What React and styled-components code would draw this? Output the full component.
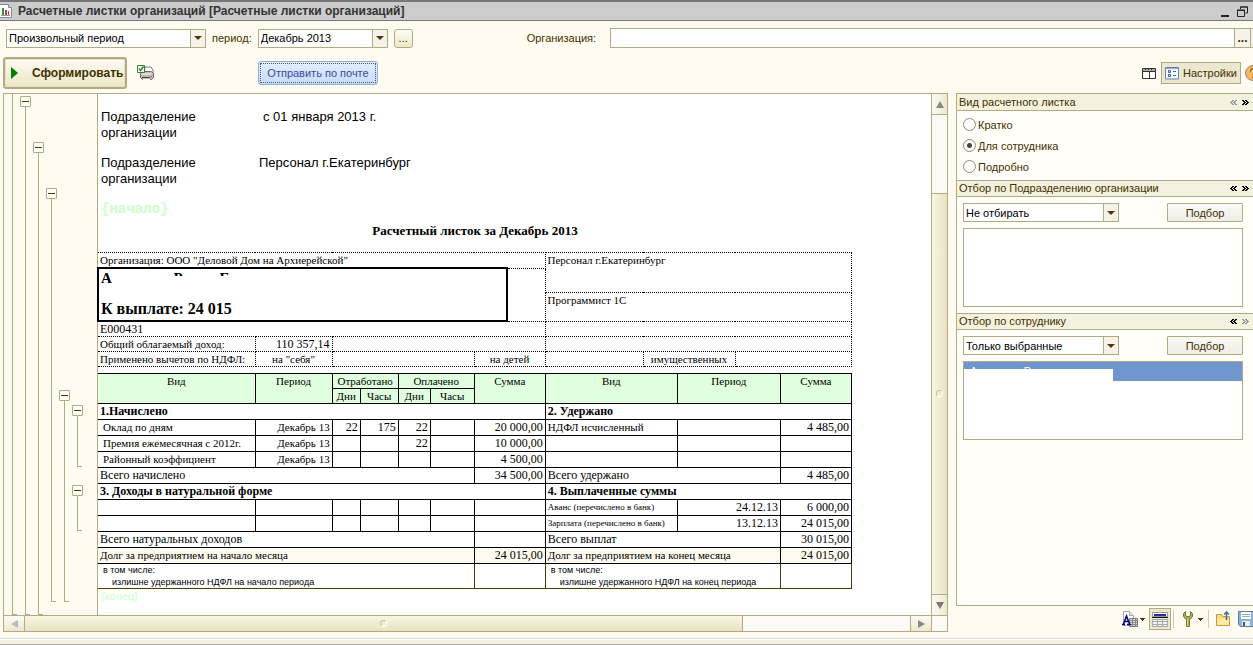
import React from 'react'
import styled, { createGlobalStyle, css } from 'styled-components'

const line = '#b3aa82'
const cream = '#fffbf0'
const bar = '#f4f1de'
const brown = '#4c3a00'

const GlobalStyle = createGlobalStyle`
  * {
    box-sizing: border-box;
  }
  body {
    margin: 0;
    background: ${cream};
    font-family: 'Liberation Sans', Arial, sans-serif;
    font-size: 11px;
    color: #3f3000;
    overflow: hidden;
  }
  button,
  select,
  input {
    font: inherit;
    color: inherit;
    margin: 0;
    padding: 0;
    border-radius: 0;
  }
  svg {
    display: block;
    flex: none;
  }
`

const Window = styled.div`
  display: flex;
  flex-direction: column;
`

const TitleBar = styled.header`
  display: flex;
  align-items: center;
  height: 21px;
  padding: 0 5px 0 0;
  background: #cccccc;
  border-top: 2px solid #777;
  border-bottom: 1px solid #777;
`

const Title = styled.h1`
  flex: 1;
  margin: 0 0 0 6px;
  font-size: 12px;
  line-height: 16px;
  font-weight: bold;
  color: #333;
  white-space: nowrap;
`

const WindowButton = styled.button`
  border: 0;
  background: none;
  margin-left: 8px;
`

const FilterRow = styled.div`
  display: flex;
  align-items: center;
  height: 20px;
  margin-top: 7px;
  padding-left: 6px;
  gap: 6px;
`

const FieldLabel = styled.label`
  white-space: nowrap;
`

const OrgField = styled.div`
  display: flex;
  flex: 1;
  align-items: center;
  gap: 14px;
  margin-left: 108px;
`

const OrgBox = styled.div`
  display: flex;
  flex: 1;
  height: 20px;
  border: 1px solid ${line};
  border-right: 0;
  background: #fff;
`

const TextInput = styled.input`
  flex: 1;
  min-width: 0;
  border: 0;
  outline: 0;
  padding: 0 3px;
  background: #fff;
`

const CellButton = styled.button`
  width: ${(p) => p.$width}px;
  border: 0;
  border-left: 1px solid ${line};
  background: #f5f2ea;
  font-size: 12px;
  font-weight: bold;
  line-height: 16px;
  overflow: hidden;
`

const SelectBox = styled.div`
  position: relative;
  width: ${(p) => p.$width}px;
  height: 19px;
  border: 1px solid ${line};
  background: #fff;
`

const NativeSelect = styled.select`
  appearance: none;
  display: block;
  width: 100%;
  height: 17px;
  padding: 0 16px 0 2px;
  border: 0;
  outline: 0;
  background: transparent;
  color: #000;
`

const SelectArrow = styled.span`
  position: absolute;
  top: 0;
  right: 0;
  display: flex;
  align-items: center;
  justify-content: center;
  width: 15px;
  height: 17px;
  border-left: 1px solid ${line};
  background: #f5f2ea;
  pointer-events: none;
`

const MoreButton = styled.button`
  width: 19px;
  height: 19px;
  border: 1px solid ${line};
  border-radius: 3px;
  background: linear-gradient(#fdfcf6, #ece7c8);
  line-height: 15px;
`

const CommandRow = styled.div`
  display: flex;
  align-items: center;
  height: 32px;
  margin-top: 9px;
  padding-left: 3px;
`

const RunButton = styled.button`
  display: flex;
  align-items: center;
  gap: 14px;
  width: 124px;
  height: 32px;
  padding-left: 6px;
  border: 2px solid ${line};
  border-radius: 3px;
  background: linear-gradient(#fdfcf3, #ebe6c4);
  box-shadow: inset 0 0 0 1px #e6e0bd;
  font-size: 12px;
  font-weight: bold;
`

const IconButton = styled.button`
  display: flex;
  align-items: center;
  margin-left: ${(p) => p.$gap || 0}px;
  border: 0;
  background: none;
`

const MailButton = styled.button`
  width: 120px;
  height: 24px;
  margin-left: 104px;
  padding: 1px;
  border: 1px solid #91aee0;
  border-radius: 3px;
  background: linear-gradient(#e3eeff, #c6dcfb);
  color: #3c4a94;
`

const DottedFocus = styled.span`
  display: block;
  height: 20px;
  border: 1px dotted #555;
  line-height: 18px;
`

const RightCommands = styled.div`
  display: flex;
  align-items: center;
  gap: 4px;
  margin-left: auto;
  width: 111px;
  overflow: hidden;
`

const SettingsButton = styled.button`
  display: flex;
  flex: none;
  align-items: center;
  gap: 3px;
  width: 80px;
  height: 22px;
  padding-left: 3px;
  border: 1px solid ${line};
  background: #ece7cf;
  white-space: nowrap;
`

const Main = styled.main`
  display: grid;
  grid-template-columns: minmax(0, 1fr) 297px;
  column-gap: 8px;
  margin-top: 4px;
  padding-left: 3px;
`

const Viewer = styled.section`
  display: grid;
  grid-template-columns: minmax(0, 1fr) 16px;
  grid-template-rows: auto 16px;
  border: 1px solid ${line};
`

const Sheet = styled.div`
  display: flex;
  min-width: 0;
  overflow: hidden;
  background: #fff;
`

const Gutter = styled.div`
  display: flex;
  flex: none;
  width: 94px;
  padding-left: 2px;
  background: ${cream};
  border-right: 1px solid ${line};
`

const GroupColumn = styled.div`
  display: flex;
  flex-direction: column;
  width: 13px;
  padding-top: ${(p) => p.$top}px;
`

const Toggle = styled.button`
  display: flex;
  align-items: center;
  justify-content: center;
  flex: none;
  width: 11px;
  height: 11px;
  margin-left: 1px;
  border: 1px solid ${line};
  border-radius: 1px;
  background: #fffef8;

  &::before {
    content: '';
    width: 7px;
    height: 1px;
    background: ${brown};
  }
`

const Bracket = styled.div`
  flex: ${(p) => (p.$length ? 'none' : '1')};
  height: ${(p) => (p.$length ? `${p.$length}px` : 'auto')};
  width: 5px;
  margin: 0 0 ${(p) => p.$after || 0}px 6px;
  border-left: 1px solid ${line};
  border-bottom: 1px solid ${line};
`

const Paper = styled.div`
  flex: 1;
  min-width: 0;
  padding-top: 15px;
  height: 521px;
  color: #000;
  font-family: 'Liberation Serif', 'Times New Roman', serif;
`

const ParamRow = styled.div`
  display: flex;
  height: 46px;
  padding-left: 3px;
  font-family: 'Liberation Sans', Arial, sans-serif;
  font-size: 13px;
  line-height: 16px;
`

const ParamName = styled.div`
  width: 110px;
`

const ParamValue = styled.div`
  padding-left: ${(p) => (p.$indent ? 52 : 48)}px;
`

const Marker = styled.div`
  height: ${(p) => (p.$mono ? 22 : 14)}px;
  padding-left: 3px;
  color: #ccffcc;
  ${(p) =>
    p.$mono
      ? css`
          font-family: 'Liberation Mono', 'Courier New', monospace;
          font-size: 14px;
          font-weight: bold;
          line-height: 16px;
        `
      : css`
          font-family: 'Liberation Sans', Arial, sans-serif;
          font-size: 11px;
          line-height: 14px;
        `}
`

const SlipTitle = styled.h2`
  width: 754px;
  margin: 0 0 13px;
  font-size: 13px;
  line-height: 16px;
  text-align: center;
`

const Table = styled.table`
  width: ${(p) => p.$width}px;
  table-layout: fixed;
  border-collapse: collapse;
  margin: 0 0 ${(p) => p.$after || 0}px ${(p) => (p.$after ? -1 : 0)}px;
  font-size: 11px;
  line-height: 14px;
`

const Row = styled.tr`
  height: ${(p) => p.$h}px;
`

const cellStyle = css`
  padding: 0 2px;
  vertical-align: top;
  text-align: ${(p) => p.$align || 'left'};
  white-space: nowrap;
  font-size: ${(p) => p.$size || 11}px;
`

const InfoCell = styled.td`
  ${cellStyle};
  border: 1px dotted #000;
  border-left-style: ${(p) => (p.$open ? 'none' : 'dotted')};
`

const PayCell = styled.td`
  padding: 1px 2px 0;
  border: 2px solid #000;
  vertical-align: top;
  font-size: 16px;
  font-weight: bold;
  line-height: 17px;
`

const HiddenName = styled.div`
  display: flex;
  height: 17px;
  margin-bottom: 13px;
  font-size: 15px;
`

const CutText = styled.span`
  height: ${(p) => p.$h}px;
  overflow: hidden;
  white-space: nowrap;
`

const Head = styled.th`
  ${cellStyle};
  border: 1px solid #000;
  background: #dfffdf;
  font-weight: normal;

  tr:first-child > &:first-child {
    border-left: 0;
  }
`

const Cell = styled.td`
  ${cellStyle};
  line-height: 15px;
  padding-left: ${(p) => (p.$indent ? 5 : 2)}px;
  border: 1px solid ${(p) => (p.$brown ? brown : '#000')};
  background: ${(p) => (p.$tint ? '#fffaf0' : '#fff')};
  font-weight: ${(p) => (p.$bold ? 'bold' : 'normal')};

  &:first-child {
    border-left: 0;
  }
`

const NoteCell = styled(Cell)`
  font-family: 'Liberation Sans', Arial, sans-serif;
  font-size: 9px;
  line-height: 12px;
  padding: 0 5px;
`

const NoteLine = styled.div`
  padding-left: ${(p) => (p.$deep ? 9 : 0)}px;
`

const VScroll = styled.div`
  display: flex;
  flex-direction: column;
  border-left: 1px solid ${line};
  background: #faf9f5;
`

const HScroll = styled.div`
  display: flex;
  border-top: 1px solid ${line};
  background: #faf9f5;
`

const ScrollButton = styled.button`
  display: flex;
  flex: none;
  align-items: center;
  justify-content: center;
  width: ${(p) => (p.$vertical ? 'auto' : '20px')};
  height: ${(p) => (p.$vertical ? '20px' : 'auto')};
  border: 0;
  background: linear-gradient(${(p) => (p.$vertical ? '90deg' : '180deg')}, #fcfbf4, #ece8cf);
`

const Thumb = styled.div`
  display: flex;
  align-items: center;
  justify-content: center;
  flex: ${(p) => p.$size};
  border: 0 solid ${line};
  border-width: ${(p) => (p.$vertical ? '1px 0' : '0 1px')};
  background: linear-gradient(${(p) => (p.$vertical ? '90deg' : '180deg')}, #f8f6e4, #e8e3c2);

  &::before {
    content: '';
    width: 5px;
    height: 5px;
    border-radius: 50%;
    border: 1px solid;
    border-color: #c4c0a4 #fff #fff #c4c0a4;
  }
`

const Track = styled.div`
  flex: ${(p) => p.$size};
  border: 0 solid ${line};
  border-width: ${(p) => (p.$vertical ? '1px 0 0' : '0 1px 0 0')};
`

const Corner = styled.div`
  border-left: 1px solid ${line};
  border-top: 1px solid ${line};
  background: #faf9f5;
`

const Side = styled.aside`
  display: flex;
  flex-direction: column;
  overflow: hidden;
`

const SettingsPanel = styled.div`
  flex: 1;
  border: 1px solid ${line};
  border-right: 0;
  background: #fffef8;
`

const PanelHead = styled.div`
  display: flex;
  align-items: center;
  height: 17px;
  padding: 0 4px 0 2px;
  background: ${bar};
  border: 0 solid ${line};
  border-width: ${(p) => (p.$first ? '0 0 1px' : '1px 0')};
`

const PanelTitle = styled.h3`
  flex: 1;
  margin: 0;
  font-size: 11px;
  font-weight: normal;
  line-height: 15px;
  white-space: nowrap;
`

const PanelButton = styled.button`
  margin-left: 5px;
  border: 0;
  background: none;
  color: ${(p) => (p.$dim ? '#999' : '#000')};
`

const RadioList = styled.div`
  display: flex;
  flex-direction: column;
  padding: 3px 0 3px 6px;
`

const RadioLabel = styled.label`
  display: flex;
  align-items: center;
  gap: 2px;
  height: 21px;
`

const Radio = styled.input`
  appearance: none;
  width: 13px;
  height: 13px;
  border: 1px solid #8f8a72;
  border-radius: 50%;
  background: #fff;

  &:checked {
    background: radial-gradient(#444 0 2px, #fff 3px);
  }
`

const PanelBody = styled.div`
  padding: 6px 10px 6px 6px;
`

const PickRow = styled.div`
  display: flex;
  justify-content: space-between;
  margin-bottom: 6px;
`

const PickButton = styled.button`
  width: 76px;
  height: 19px;
  border: 1px solid ${line};
  border-radius: 1px;
  background: linear-gradient(#faf9f5, #f0ede6);
`

const PickedList = styled.div`
  height: 79px;
  border: 1px solid ${line};
  background: #fff;
`

const PickedItem = styled.div`
  height: 19px;
  background: #6f97ce;
  color: #fff;
`

const PickedName = styled.div`
  display: flex;
  flex-direction: column;
  height: 19px;
  width: 149px;

  &::after {
    content: '';
    flex: 1;
    background: #fff;
  }
`

const PickedText = styled.span`
  height: 7px;
  padding: 3px 0 0 6px;
  line-height: 13px;
  overflow: hidden;
`

const SideTools = styled.div`
  display: flex;
  align-items: center;
  height: 26px;
  padding-left: 166px;
`

const ToggledTool = styled(IconButton)`
  justify-content: center;
  flex: none;
  width: 22px;
  height: 22px;
  border: 1px solid ${line};
  background: #ece7cf;
`

const Divider = styled.span`
  flex: none;
  width: 1px;
  height: 18px;
  margin: 0 0 0 ${(p) => p.$gap}px;
  background: #d0caae;
`

const StatusBar = styled.footer`
  height: 7px;
  margin-top: 6px;
  background: ${bar};
  border-top: 1px solid #ddd;
  border-bottom: 1px solid #aaa;
  box-shadow: inset 0 1px 0 #fff;
`

const Triangle = ({ dir = 'down', size = 'small', color = brown }) => {
  const shapes = {
    'small-down': [5, 3, 'M0 0h5v1h-1v1h-1v1h-1v-1h-1v-1h-1z'],
    'medium-down': [8, 4, 'M0 0h8l-4 4z'],
    'big-down': [8, 7, 'M0 0h8l-4 7z'],
    'big-up': [8, 7, 'M0 7h8l-4 -7z'],
    'big-left': [7, 8, 'M7 0v8l-7 -4z'],
    'big-right': [7, 8, 'M0 0v8l7 -4z'],
    'run-right': [7, 12, 'M0 0v12l7 -6z'],
  }
  const [w, h, d] = shapes[`${size}-${dir}`]
  return (
    <svg width={w} height={h} viewBox={`0 0 ${w} ${h}`}>
      <path d={d} fill={color} />
    </svg>
  )
}

const ReportIcon = () => (
  <svg width="12" height="14" viewBox="0 0 12 14">
    <path d="M0 .5h8.500l3 3v10H0" fill="#fff" stroke="#7b8ba5" />
    <path d="M8.500 .5v3h3" fill="#dce4f0" stroke="#7b8ba5" />
    <path d="M2 4h2v7h-2z" fill="#2a9c3c" />
    <path d="M5 6h2v5h-2z" fill="#d33" />
    <path d="M8 7h1v4h-1z" fill="#d33" />
    <path d="M1 11.500h9" stroke="#999" />
  </svg>
)

const PrinterIcon = () => (
  <svg width="17" height="16" viewBox="0 0 17 16">
    <path d="M8 2h6l2 3v3h-9z" fill="#fff" stroke="#777" />
    <path d="M3.500 8.500l2-2h9l2 2v4l-2 2h-9l-2-2z" fill="#bdb9b4" stroke="#6e6a66" />
    <path d="M5 8h9l1 2h-11z" fill="#dddcdc" />
    <path d="M5 12.500h8" stroke="#444" />
    <path d="M6 14.500h7" stroke="#fff" />
    <path d="M13 11h2v1h-2z" fill="#d55" />
    <path d="M.5 .5h7v7h-7z" fill="#fff" stroke="#3d7a3d" />
    <path d="M2 3.500l1.500 2l3-4" fill="none" stroke="#1f8f1f" strokeWidth="1.500" />
  </svg>
)

const GridIcon = () => (
  <svg width="15" height="13" viewBox="0 0 15 13">
    <path d="M.5 1.500h13v10h-13z" fill="#fff" stroke="#333" />
    <path d="M1 2h12v2h-12z" fill="#aaa" />
    <path d="M3.500 1v2M6.500 1v2M9.500 1v2" stroke="#333" />
    <path d="M1 4.500h12M7.500 5v6" stroke="#333" />
  </svg>
)

const SettingsIcon = () => (
  <svg width="15" height="13" viewBox="0 0 15 13">
    <path d="M.5 .5h13v11.500h-13z" fill="#f4f8ff" stroke="#6a80bd" />
    <path d="M1 1h12v1h-12z" fill="#8fa5dc" />
    <path d="M3.500 3.500h2v2h-2zM3.500 7.500h2v2h-2z" fill="#cdd8f5" stroke="#4a60a8" />
    <path d="M8 4.500h3M8 8.500h3" stroke="#5b6470" />
  </svg>
)

const HelpIcon = () => (
  <svg width="16" height="16" viewBox="0 0 16 16">
    <circle cx="8" cy="8" r="7.500" fill="#f5b45e" stroke="#8f8b84" />
    <path d="M3 6a5.500 5 0 0 1 10 0z" fill="#fbd9a4" />
    <path d="M5.500 6.500a2.500 2.500 0 1 1 3.500 2l-1 1.500M8 11.500v1.500" fill="none" stroke="#8a5a1c" strokeWidth="1.500" />
  </svg>
)

const Chevrons = ({ right }) => (
  <svg width="7" height="5" viewBox="0 0 7 5">
    <path
      d={
        right
          ? 'M0 0h2v1h1v1h1v1h-1v1h-1v1h-2v-1h1v-1h1v-1h-1v-1h-1zM3 0h2v1h1v1h1v1h-1v1h-1v1h-2v-1h1v-1h1v-1h-1v-1h-1z'
          : 'M4 0h-2v1h-1v1h-1v1h1v1h1v1h2v-1h-1v-1h-1v-1h1v-1h1zM7 0h-2v1h-1v1h-1v1h1v1h1v1h2v-1h-1v-1h-1v-1h1v-1h1z'
      }
      fill="currentColor"
    />
  </svg>
)

const FontTableIcon = () => (
  <svg width="16" height="16" viewBox="0 0 16 16">
    <path d="M1.500 .5h6l4 4v10h-10z" fill="#fff" stroke="#aaa" />
    <path d="M7.500 .5v4h4" fill="#e4e4e4" stroke="#aaa" />
    <path d="M7.500 7.500h8v8h-8z" fill="#ddd" stroke="#777" />
    <path d="M8 9.500h7M8 11.500h7M8 13.500h7M10.500 8v7M13.500 8v7" stroke="#888" />
    <path d="M0 13.500h3M5 13.500h4M1.500 13l3-8l3 8M2.500 10.500h4" fill="none" stroke="#00007c" strokeWidth="1.500" />
  </svg>
)

const HeaderTableIcon = () => (
  <svg width="16" height="15" viewBox="0 0 16 15">
    <path d="M.5 .5h15v4h-15z" fill="#fff" stroke="#999" />
    <path d="M2 2h12v2h-12z" fill="#2b2ba0" />
    <path d="M0 5.500h16" stroke="#111" />
    <path d="M.5 7.500h15v7h-15z" fill="#f4f4f4" stroke="#aaa" />
    <path d="M1 9.500h14M1 12.500h14M5.500 7v7M10.500 7v7" stroke="#aaa" />
  </svg>
)

const WrenchIcon = () => (
  <svg width="10" height="16" viewBox="0 0 10 16">
    <path
      d="M2.500 .5l-2 2v3l2 2.500h1v7.500h3v-7.500h1l2-2.500v-3l-2-2v4l-1.500 1h-2l-1.500-1z"
      fill="#aeae58"
      stroke="#77772f"
    />
    <path d="M4.500 8v7" stroke="#dada9a" />
  </svg>
)

const FolderIcon = () => (
  <svg width="15" height="16" viewBox="0 0 15 16">
    <path d="M.5 14.500v-11h5l1.500 2h6.500v9z" fill="#f5dc7c" stroke="#c09a3c" />
    <path d="M1 8h12v6h-12z" fill="#fbe9a0" />
    <path d="M10.500 9v-8M8 3.500l2.500-2.500l2.500 2.500" fill="none" stroke="#3f6f94" strokeWidth="1.500" />
  </svg>
)

const SaveIcon = () => (
  <svg width="16" height="16" viewBox="0 0 16 16">
    <path d="M.5 .5h15v15h-13l-2-2z" fill="#8db4d6" stroke="#567ea3" />
    <path d="M3 1h10v7h-10z" fill="#fff" />
    <path d="M4 3.500h8M4 5.500h8" stroke="#9ab" />
    <path d="M4 10h8v5h-8z" fill="#e8eef4" />
    <path d="M5 11h2v4h-2z" fill="#456" />
  </svg>
)

const Select = ({ id, label, width, value }) => (
  <SelectBox $width={width}>
    <NativeSelect id={id} aria-label={label} defaultValue={value}>
      <option>{value}</option>
    </NativeSelect>
    <SelectArrow>
      <Triangle size="medium" />
    </SelectArrow>
  </SelectBox>
)

// outline levels shown left of the sheet, one column per nesting level
const groups = [
  { top: 0, items: [{ noToggle: true }] },
  { top: 2, items: [{}] },
  { top: 48, items: [{}] },
  { top: 94, items: [{ after: 13 }] },
  { top: 296, items: [{ after: 13 }] },
  { top: 311, items: [{ length: 51, after: 18 }, { length: 35 }] },
]

const infoColumns = [157, 77, 142, 33, 38, 98, 92, 116]
const slipColumns = [157, 77, 28, 38, 32, 44, 71, 132, 103, 71]

const Columns = ({ widths }) => (
  <colgroup>
    {widths.map((w, i) => (
      <col key={i} style={{ width: w }} />
    ))}
  </colgroup>
)

const InfoTable = () => (
  <Table $width={753} $after={6}>
    <Columns widths={infoColumns} />
    <tbody>
      <Row $h={14}>
        <InfoCell $open colSpan={5}>
          Организация: ООО "Деловой Дом на Архиерейской"
        </InfoCell>
        <InfoCell colSpan={3} rowSpan={2}>
          Персонал г.Екатеринбург
        </InfoCell>
      </Row>
      <Row $h={24}>
        <PayCell colSpan={4} rowSpan={2}>
          <HiddenName>
            <span>А</span>
            <CutText $h={6}>нисимов Роман Борисович</CutText>
          </HiddenName>
          К выплате: 24 015
        </PayCell>
        <InfoCell rowSpan={2} />
      </Row>
      <Row $h={29}>
        <InfoCell colSpan={3}>Программист 1С</InfoCell>
      </Row>
      <Row $h={15}>
        <InfoCell $open $size={12} colSpan={5}>
          Е000431
        </InfoCell>
        <InfoCell colSpan={3} />
      </Row>
      <Row $h={15}>
        <InfoCell $open>Общий облагаемый доход:</InfoCell>
        <InfoCell $align="right" $size={12}>
          110 357,14
        </InfoCell>
        <InfoCell colSpan={3} />
        <InfoCell colSpan={3} />
      </Row>
      <Row $h={15}>
        <InfoCell $open>Применено вычетов по НДФЛ:</InfoCell>
        <InfoCell $align="center">на "себя"</InfoCell>
        <InfoCell />
        <InfoCell colSpan={2} $align="center">
          на детей
        </InfoCell>
        <InfoCell />
        <InfoCell $align="center">имущественных</InfoCell>
        <InfoCell />
      </Row>
    </tbody>
  </Table>
)

const accruals = [
  ['Оклад по дням', 'Декабрь 13', '22', '175', '22', '', '20 000,00', 'НДФЛ исчисленный', '', '4 485,00'],
  ['Премия ежемесячная с 2012г.', 'Декабрь 13', '', '', '22', '', '10 000,00', '', '', ''],
  ['Районный коэффициент', 'Декабрь 13', '', '', '', '', '4 500,00', '', '', ''],
]

const payments = [
  ['', '', '', '', '', '', '', 'Аванс (перечислено в банк)', '24.12.13', '6 000,00'],
  ['', '', '', '', '', '', '', 'Зарплата (перечислено в банк)', '13.12.13', '24 015,00'],
]

const DataRow = ({ cells, small }) => (
  <Row $h={16}>
    {cells.map((text, i) => {
      const isName = i === 0 || i === 7
      const size = isName ? (small ? 9 : 11) : i === 1 ? 11 : 12
      return (
        <Cell key={i} $indent={i === 0} $align={isName ? 'left' : 'right'} $size={size}>
          {text}
        </Cell>
      )
    })}
  </Row>
)

const SectionRow = ({ left, right }) => (
  <Row $h={16}>
    <Cell $bold $size={12} colSpan={7}>
      {left}
    </Cell>
    <Cell $bold $size={12} colSpan={3}>
      {right}
    </Cell>
  </Row>
)

const TotalRow = ({ left, leftSum, right, rightSum, tint, size = 12 }) => (
  <Row $h={16}>
    <Cell $tint={tint} $size={size} colSpan={6}>
      {left}
    </Cell>
    <Cell $tint={tint} $align="right" $size={12}>
      {leftSum}
    </Cell>
    <Cell $tint={tint} $size={size} colSpan={2}>
      {right}
    </Cell>
    <Cell $tint={tint} $align="right" $size={12}>
      {rightSum}
    </Cell>
  </Row>
)

const Note = ({ children }) => (
  <>
    <NoteLine>в том числе:</NoteLine>
    <NoteLine $deep>{children}</NoteLine>
  </>
)

const SlipTable = () => (
  <Table $width={754}>
    <Columns widths={slipColumns} />
    <thead>
      <Row $h={15}>
        <Head $align="center" rowSpan={2}>Вид</Head>
        <Head $align="center" rowSpan={2}>Период</Head>
        <Head $align="center" colSpan={2}>Отработано</Head>
        <Head $align="center" colSpan={2}>Оплачено</Head>
        <Head $align="center" rowSpan={2}>Сумма</Head>
        <Head $align="center" rowSpan={2}>Вид</Head>
        <Head $align="center" rowSpan={2}>Период</Head>
        <Head $align="center" rowSpan={2}>Сумма</Head>
      </Row>
      <Row $h={15}>
        <Head $align="center">Дни</Head>
        <Head $align="center">Часы</Head>
        <Head $align="center">Дни</Head>
        <Head $align="center">Часы</Head>
      </Row>
    </thead>
    <tbody>
      <SectionRow left="1.Начислено" right="2. Удержано" />
      {accruals.map((cells) => (
        <DataRow key={cells[0]} cells={cells} />
      ))}
      <TotalRow left="Всего начислено" leftSum="34 500,00" right="Всего удержано" rightSum="4 485,00" />
      <SectionRow left="3. Доходы в натуральной форме" right="4. Выплаченные суммы" />
      {payments.map((cells) => (
        <DataRow key={cells[7]} cells={cells} small />
      ))}
      <TotalRow left="Всего натуральных доходов" right="Всего выплат" rightSum="30 015,00" />
      <TotalRow
        tint
        size={11}
        left="Долг за предприятием на начало месяца"
        leftSum="24 015,00"
        right="Долг за предприятием на конец месяца"
        rightSum="24 015,00"
      />
      <Row $h={24}>
        <NoteCell $brown colSpan={6}>
          <Note>излишне удержанного НДФЛ на начало периода</Note>
        </NoteCell>
        <Cell $brown />
        <NoteCell $brown colSpan={2}>
          <Note>излишне удержанного НДФЛ на конец периода</Note>
        </NoteCell>
        <Cell $brown />
      </Row>
    </tbody>
  </Table>
)

const Outline = () => (
  <Gutter>
    {groups.map(({ top, items }, i) => (
      <GroupColumn key={i} $top={top}>
        {items.map(({ noToggle, length, after }, j) => (
          <React.Fragment key={j}>
            {!noToggle && <Toggle aria-label="Свернуть" />}
            <Bracket $length={length} $after={after} />
          </React.Fragment>
        ))}
      </GroupColumn>
    ))}
  </Gutter>
)

const PanelHeader = ({ title, first, dimLeft, dimRight }) => (
  <PanelHead $first={first}>
    <PanelTitle>{title}</PanelTitle>
    <PanelButton $dim={dimLeft} aria-label="Предыдущая">
      <Chevrons />
    </PanelButton>
    <PanelButton $dim={dimRight} aria-label="Следующая">
      <Chevrons right />
    </PanelButton>
  </PanelHead>
)

const kinds = ['Кратко', 'Для сотрудника', 'Подробно']

export default () => (
  <Window>
    <GlobalStyle />
    <TitleBar>
      <ReportIcon />
      <Title>Расчетные листки организаций [Расчетные листки организаций]</Title>
      <WindowButton aria-label="Свернуть окно">
        <svg width="8" height="11" viewBox="0 0 8 11">
          <path d="M0 9h8v2h-8z" fill="#222" />
        </svg>
      </WindowButton>
      <WindowButton aria-label="Восстановить окно">
        <svg width="11" height="11" viewBox="0 0 11 11">
          <path d="M3.500 3v-2h7v6h-2M3 1h8" fill="none" stroke="#222" />
          <path d="M.5 4.500h7v6h-7zM0 4h8" fill="none" stroke="#222" />
        </svg>
      </WindowButton>
    </TitleBar>

    <FilterRow>
      <Select label="Вид периода" width={200} value="Произвольный период" />
      <FieldLabel htmlFor="period">период:</FieldLabel>
      <Select id="period" width={130} value="Декабрь 2013" />
      <MoreButton>...</MoreButton>
      <OrgField>
        <FieldLabel htmlFor="org">Организация:</FieldLabel>
        <OrgBox>
          <TextInput id="org" />
          <CellButton $width={16}>...</CellButton>
          <CellButton $width={3} aria-label="Очистить" />
        </OrgBox>
      </OrgField>
    </FilterRow>

    <CommandRow>
      <RunButton>
        <Triangle dir="right" size="run" color="#008000" />
        Сформировать
      </RunButton>
      <IconButton $gap={10} aria-label="Печать">
        <PrinterIcon />
      </IconButton>
      <MailButton>
        <DottedFocus>Отправить по почте</DottedFocus>
      </MailButton>
      <RightCommands>
        <IconButton aria-label="Таблица">
          <GridIcon />
        </IconButton>
        <SettingsButton>
          <SettingsIcon />
          Настройки
        </SettingsButton>
        <IconButton aria-label="Справка">
          <HelpIcon />
        </IconButton>
      </RightCommands>
    </CommandRow>

    <Main>
      <Viewer>
        <Sheet>
          <Outline />
          <Paper>
            <ParamRow>
              <ParamName>Подразделение организации</ParamName>
              <ParamValue $indent>с 01 января 2013 г.</ParamValue>
            </ParamRow>
            <ParamRow>
              <ParamName>Подразделение организации</ParamName>
              <ParamValue>Персонал г.Екатеринбург</ParamValue>
            </ParamRow>
            <Marker $mono>{'{начало}'}</Marker>
            <SlipTitle>Расчетный листок за Декабрь 2013</SlipTitle>
            <InfoTable />
            <SlipTable />
            <Marker>{'{конец}'}</Marker>
          </Paper>
        </Sheet>
        <VScroll>
          <ScrollButton $vertical aria-label="Вверх">
            <Triangle dir="up" size="big" color="#888" />
          </ScrollButton>
          <Track $vertical $size={78} />
          <Thumb $vertical $size={402} />
          <ScrollButton $vertical aria-label="Вниз">
            <Triangle dir="down" size="big" color="#777" />
          </ScrollButton>
        </VScroll>
        <HScroll>
          <ScrollButton aria-label="Влево">
            <Triangle dir="left" size="big" color="#bbb" />
          </ScrollButton>
          <Thumb $size={719} />
          <Track $size={168} />
          <ScrollButton aria-label="Вправо">
            <Triangle dir="right" size="big" color="#888" />
          </ScrollButton>
        </HScroll>
        <Corner />
      </Viewer>

      <Side>
        <SettingsPanel>
          <PanelHeader first dimLeft title="Вид расчетного листка" />
          <RadioList>
            {kinds.map((kind) => (
              <RadioLabel key={kind}>
                <Radio type="radio" name="kind" defaultChecked={kind === 'Для сотрудника'} />
                {kind}
              </RadioLabel>
            ))}
          </RadioList>
          <PanelHeader title="Отбор по Подразделению организации" />
          <PanelBody>
            <PickRow>
              <Select label="Отбор по подразделению" width={156} value="Не отбирать" />
              <PickButton>Подбор</PickButton>
            </PickRow>
            <PickedList />
          </PanelBody>
          <PanelHeader dimRight title="Отбор по сотруднику" />
          <PanelBody>
            <PickRow>
              <Select label="Отбор по сотруднику" width={156} value="Только выбранные" />
              <PickButton>Подбор</PickButton>
            </PickRow>
            <PickedList>
              <PickedItem>
                <PickedName>
                  <PickedText>Анисимов Роман Борисович</PickedText>
                </PickedName>
              </PickedItem>
            </PickedList>
          </PanelBody>
        </SettingsPanel>
        <SideTools>
          <IconButton aria-label="Шрифт">
            <FontTableIcon />
          </IconButton>
          <IconButton $gap={2} aria-label="Варианты шрифта">
            <Triangle />
          </IconButton>
          <ToggledTool $gap={4} aria-label="Шапка таблицы">
            <HeaderTableIcon />
          </ToggledTool>
          <Divider $gap={2} />
          <IconButton $gap={9} aria-label="Сервис">
            <WrenchIcon />
          </IconButton>
          <IconButton $gap={5} aria-label="Меню сервиса">
            <Triangle />
          </IconButton>
          <Divider $gap={5} />
          <IconButton $gap={7} aria-label="Открыть">
            <FolderIcon />
          </IconButton>
          <IconButton $gap={7} aria-label="Сохранить">
            <SaveIcon />
          </IconButton>
        </SideTools>
      </Side>
    </Main>
    <StatusBar />
  </Window>
)
